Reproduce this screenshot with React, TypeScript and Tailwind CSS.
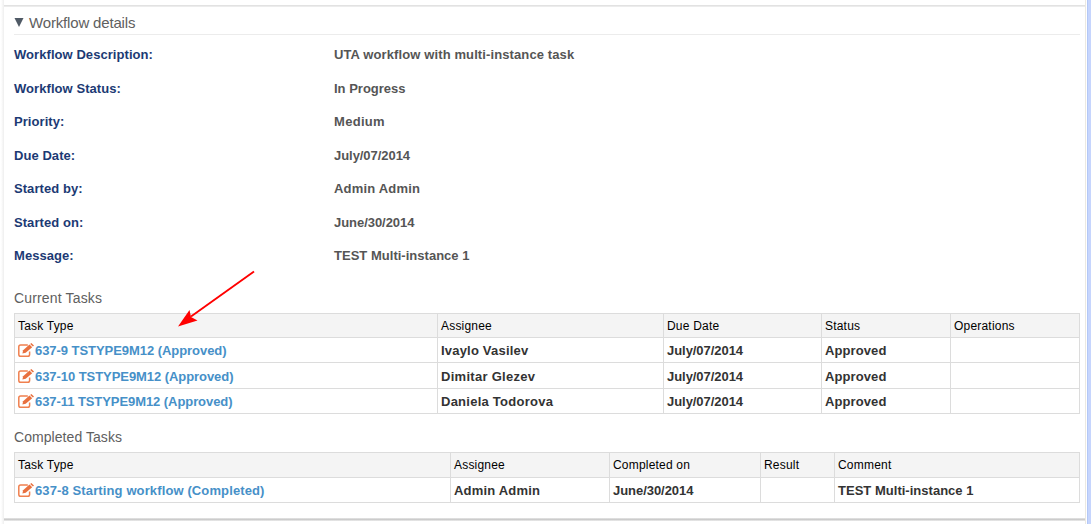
import React from 'react';

const details = [
  { label: 'Workflow Description:', value: 'UTA workflow with multi-instance task', row: 'h-[34px]', spacing: 'tracking-[0.11px]' },
  { label: 'Workflow Status:', value: 'In Progress', row: 'h-[33px]', spacing: 'tracking-[0px]' },
  { label: 'Priority:', value: 'Medium', row: 'h-[34px]', spacing: 'tracking-[0.3px]' },
  { label: 'Due Date:', value: 'July/07/2014', row: 'h-[33px]', spacing: 'tracking-[-0.05px]' },
  { label: 'Started by:', value: 'Admin Admin', row: 'h-[34px]', spacing: 'tracking-[0.2px]' },
  { label: 'Started on:', value: 'June/30/2014', row: 'h-[33px]', spacing: 'tracking-[-0.05px]' },
  { label: 'Message:', value: 'TEST Multi-instance 1', row: 'h-[33px]', spacing: 'tracking-[0.02px]' },
];

type Cell = { text: string; spacing: string };

const dueDate: Cell = { text: 'July/07/2014', spacing: 'tracking-[-0.05px]' };
const approved: Cell = { text: 'Approved', spacing: 'tracking-[0.1px]' };
const empty: Cell = { text: '', spacing: '' };

const currentTasks: Cell[][] = [
  [{ text: '637-9 TSTYPE9M12 (Approved)', spacing: 'tracking-[-0.05px]' }, { text: 'Ivaylo Vasilev', spacing: 'tracking-[0.2px]' }, dueDate, approved, empty],
  [{ text: '637-10 TSTYPE9M12 (Approved)', spacing: 'tracking-[-0.06px]' }, { text: 'Dimitar Glezev', spacing: 'tracking-[0.28px]' }, dueDate, approved, empty],
  [{ text: '637-11 TSTYPE9M12 (Approved)', spacing: 'tracking-[-0.07px]' }, { text: 'Daniela Todorova', spacing: 'tracking-[0.25px]' }, dueDate, approved, empty],
];

const completedTasks: Cell[][] = [
  [
    { text: '637-8 Starting workflow (Completed)', spacing: 'tracking-[0.12px]' },
    { text: 'Admin Admin', spacing: 'tracking-[0.2px]' },
    { text: 'June/30/2014', spacing: 'tracking-[-0.05px]' },
    empty,
    { text: 'TEST Multi-instance 1', spacing: 'tracking-[0.02px]' },
  ],
];

function EditIcon() {
  return (
    <svg className="mb-[1px] h-[14px] w-[16px] shrink-0" viewBox="0 0 16 14" fill="none">
      <path d="M9.8 2H2.6Q0.8 2 0.8 3.8V11.4Q0.8 13.2 2.6 13.2H9.8Q11.6 13.2 11.6 11.4V8.4" stroke="#f0804f" strokeWidth="1.5" />
      <path d="M4.4 10.4L5.1 7.2L11.5 1.6L14.2 4.2L7.7 9.7Z" fill="#e8703f" />
      <path d="M12.2 1L13.3 0L16 2.4L14.9 3.5Z" fill="#e8703f" />
    </svg>
  );
}

function TaskTable({ headers, rows, columns, rowSizes }: { headers: string[]; rows: Cell[][]; columns: string; rowSizes: string }) {
  return (
    <div className={`grid w-[1066px] border-r border-b border-[#dcdcdc] ${columns} ${rowSizes}`}>
      {headers.map((header) => (
        <div key={header} className="flex items-center border-t border-l border-[#dcdcdc] bg-[#f4f4f4] pl-[3px] text-[12px] leading-none tracking-[0.2px] text-black">
          {header}
        </div>
      ))}
      {rows.map((row) =>
        row.map((cell, i) => (
          <div key={`${row[0].text}-${i}`} className={`flex items-center border-t border-l border-[#dcdcdc] pt-[1px] pl-[3px] text-[13px] leading-none font-bold whitespace-nowrap text-[#333] ${cell.spacing}`}>
            {i === 0 ? (
              <a className="flex items-center gap-[1px] text-[#4690c8]">
                <EditIcon />
                {cell.text}
              </a>
            ) : (
              cell.text
            )}
          </div>
        )),
      )}
    </div>
  );
}

export default function App() {
  return (
    <div className="relative flex h-[524px] w-[1091px] overflow-hidden bg-white font-['Liberation_Sans',Arial,sans-serif]">
      <div className="w-[4px] shrink-0 bg-linear-to-r from-white from-25% to-[#eeeeee]" />
      <div className="flex w-[1081px] shrink-0 flex-col">
        <div className="h-[5px] shrink-0" />
        <div className="h-[2px] shrink-0 border-t border-[#e2e2e2] bg-[#ececec]" />
        <main className="flex h-[511px] shrink-0 flex-col pl-[10px]">
          <h1 className="flex h-[28px] w-[1066px] shrink-0 items-center gap-[5px] border-b border-[#ececec] pt-[4px] text-[15px] leading-none text-[#606060]">
            <svg className="h-[9px] w-[10px]" viewBox="0 0 10 9">
              <path d="M0.5 0H9.5L5 9Z" fill="#505a66" />
            </svg>
            <span className="tracking-[-0.17px]">Workflow details</span>
          </h1>
          <dl className="flex shrink-0 flex-col pt-[13px] text-[13px] leading-[14px] font-bold">
            {details.map(({ label, value, row, spacing }) => (
              <div key={label} className={`flex ${row}`}>
                <dt className="w-[320px] tracking-[0.06px] text-[#1c3a74]">{label}</dt>
                <dd className={`text-[#555] ${spacing}`}>{value}</dd>
              </div>
            ))}
          </dl>
          <h2 className="flex h-[31px] shrink-0 items-center pt-[1px] text-[14px] leading-none tracking-[0.16px] text-[#606060]">Current Tasks</h2>
          <TaskTable
            headers={['Task Type', 'Assignee', 'Due Date', 'Status', 'Operations']}
            rows={currentTasks}
            columns="grid-cols-[423px_226px_158px_129px_129px]"
            rowSizes="grid-rows-[24px_25px_26px_25px]"
          />
          <h2 className="flex h-[38px] shrink-0 items-center pt-[7px] text-[14px] leading-none tracking-[0.06px] text-[#606060]">Completed Tasks</h2>
          <TaskTable
            headers={['Task Type', 'Assignee', 'Completed on', 'Result', 'Comment']}
            rows={completedTasks}
            columns="grid-cols-[436px_159px_151px_74px_245px]"
            rowSizes="grid-rows-[25px_25px]"
          />
        </main>
        <div className="h-[3px] shrink-0 bg-linear-to-b from-[#e6e6e6] via-[#cccccc] to-[#eeeeee]" />
      </div>
      <div className="w-[1px] shrink-0 bg-[#ece9e2]" />
      <div className="w-[1px] shrink-0 bg-white" />
      <div className="w-[4px] shrink-0 border-l border-[#b4c8f6] bg-[#c6d5fd]" />
      <svg className="absolute top-[265px] left-[170px] h-[70px] w-[90px]" viewBox="170 265 90 70">
        <path d="M254 271.5L191 316.5" stroke="#ff0000" strokeWidth="1.9" />
        <path d="M178 326.5L189.5 310L191 317L197.5 320.5Z" fill="#ff0000" />
      </svg>
    </div>
  );
}
